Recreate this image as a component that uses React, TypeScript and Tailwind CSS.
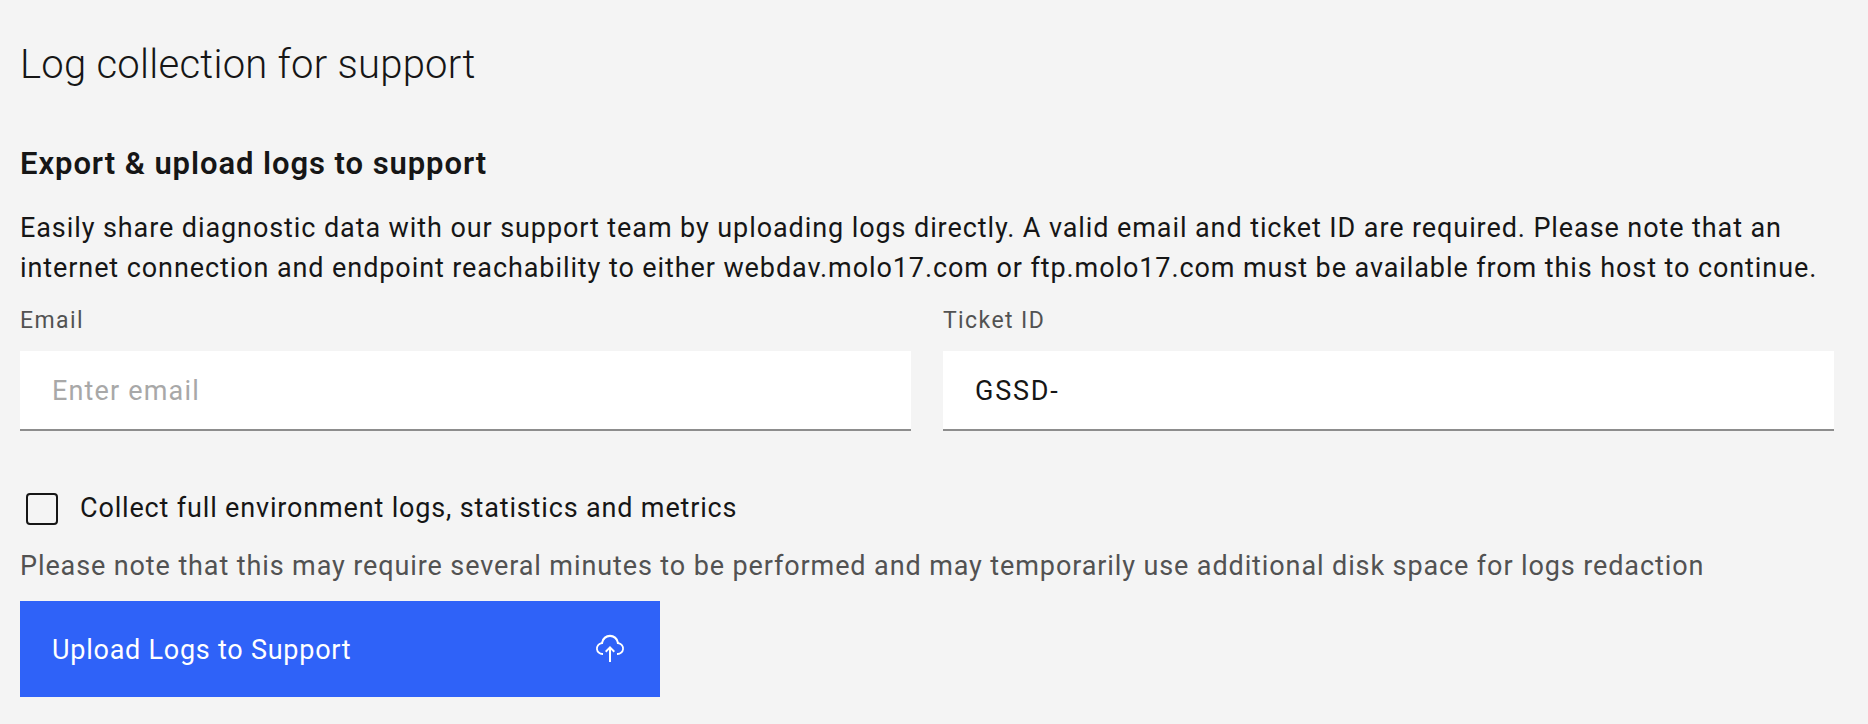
function Field({ label, placeholder, value }: { label: string; placeholder?: string; value?: string }) {
  return (
    <div className="flex flex-col">
      <label className="text-[#525252] text-[23px] leading-[20px] tracking-[1.4px] h-[21px] pt-[1px]">{label}</label>
      <div className="mt-[20px] h-[80px] bg-white border-b-2 border-[#8d8d8d] px-[32px] flex items-center text-[27px]">
        {value ? <span className="text-[#161616] tracking-[1.8px] pt-[2px]">{value}</span> : <span className="text-[#a8a8a8] tracking-[1.17px] pt-[2px]">{placeholder}</span>}
      </div>
    </div>
  );
}

export default function App() {
  return (
    <div className="w-[1868px] h-[724px] bg-[#f4f4f4] pl-[20px] pr-[34px] pt-[41px] font-['Roboto',sans-serif] text-[#161616] overflow-hidden">
      <h1 className="text-[40px] leading-[48px] font-light tracking-[0.25px]">Log collection for support</h1>
      <h2 className="mt-[57px] text-[31px] leading-[36px] font-semibold tracking-[0.93px]">Export &amp; upload logs to support</h2>
      <p className="mt-[26px] text-[27px] leading-[40px] tracking-[0.91px]">
        Easily share diagnostic data with our support team by uploading logs directly. A valid email and ticket ID are required. Please note that an<br />
        internet connection and endpoint reachability to either webdav.molo17.com or ftp.molo17.com must be available from this host to continue.
      </p>
      <div className="mt-[22px] grid grid-cols-2 gap-[32px]">
        <Field label="Email" placeholder="Enter email" />
        <Field label="Ticket ID" value="GSSD-" />
      </div>
      <div className="mt-[62px] flex items-center pl-[6px] gap-[22px]">
        <span className="w-[32px] h-[32px] border-2 border-[#161616] rounded-[4px]" />
        <span className="text-[27px] leading-[30px] pb-[2px] tracking-[0.84px]">Collect full environment logs, statistics and metrics</span>
      </div>
      <p className="mt-[21px] text-[#525252] text-[27px] leading-[40px] tracking-[0.89px]">
        Please note that this may require several minutes to be performed and may temporarily use additional disk space for logs redaction
      </p>
      <button className="mt-[15px] w-[640px] h-[96px] bg-[#2f62f8] text-white flex items-center justify-between pl-[32px] pr-[34px] text-[27px] tracking-[0.75px]">
        <span className="pt-[2px]">Upload Logs to Support</span>
        <svg width="32" height="32" viewBox="0 0 32 32" fill="currentColor">
          <path d="M11 18 12.41 19.41 15 16.83 15 29 17 29 17 16.83 19.59 19.41 21 18 16 13 11 18z" />
          <path d="M23.5,22H23V20h.5a4.5,4.5,0,0,0,.36-9L23,10.93l-.1-.85a6.95,6.95,0,0,0-13.8,0L9,10.93,8.14,11a4.5,4.5,0,0,0,.36,9H9v2H8.5A6.5,6.5,0,0,1,7.2,9.14a8.94,8.94,0,0,1,17.6,0A6.5,6.5,0,0,1,23.5,22Z" />
        </svg>
      </button>
    </div>
  );
}
